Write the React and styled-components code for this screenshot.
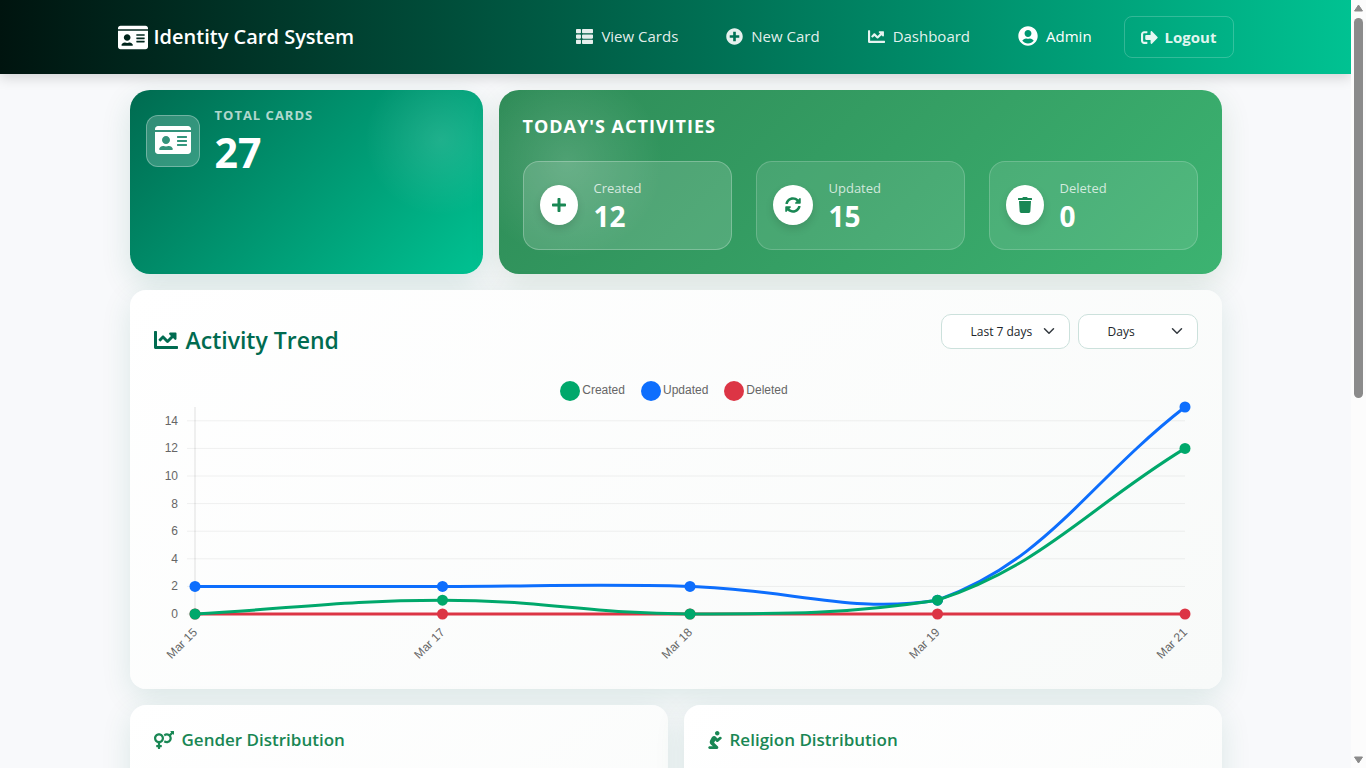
import React from "react";
import styled, { createGlobalStyle } from "styled-components";
import {
  FaIdCard,
  FaThList,
  FaPlusCircle,
  FaChartLine,
  FaUserCircle,
  FaSignOutAlt,
  FaPlus,
  FaSyncAlt,
  FaTrash,
  FaVenusMars,
  FaPray,
} from "react-icons/fa";

const GlobalStyle = createGlobalStyle`
  *, *::before, *::after { box-sizing: border-box; }
  body {
    margin: 0;
    background: #f8f9fb;
    color: #212529;
    font-family: "Segoe UI", "Open Sans", "Noto Sans", sans-serif;
    font-size: 16px;
    line-height: 24px;
  }
  h2, h3, p, dl, dt, dd { margin: 0; font-weight: inherit; }
  svg { flex: none; }
`;

const Window = styled.div`
  display: grid;
  grid-template-columns: minmax(0, 1fr) 15px;
  height: 100vh;
  overflow: hidden;
`;

const Page = styled.div`
  overflow: hidden;
`;

const Glyph = styled.span`
  display: inline-flex;
  flex: none;

  svg {
    display: block;
    width: ${(p) => p.$width || p.$size}px;
    height: ${(p) => p.$size}px;
  }
`;

/* Navigation */

const NavBar = styled.header`
  position: relative;
  background: linear-gradient(90deg, #00140f 0%, #006b50 50%, #00c292 100%);
  box-shadow: 0 4px 12px rgba(0, 0, 0, 0.15);
`;

const NavInner = styled.div`
  display: flex;
  align-items: center;
  justify-content: space-between;
  max-width: 1140px;
  margin: 0 auto;
  padding: 16px 12px;
`;

const Brand = styled.a`
  display: flex;
  align-items: center;
  gap: 6px;
  color: #fff;
  font-size: 20px;
  font-weight: 600;
  text-decoration: none;
`;

const NavLinks = styled.nav`
  display: flex;
  align-items: center;
  gap: 48px;
  padding-bottom: 2px;
`;

const NavLink = styled.a`
  display: flex;
  align-items: center;
  gap: 8px;
  color: ${(p) => (p.$strong ? "#fff" : "rgba(255, 255, 255, 0.9)")};
  font-size: 15px;
  text-decoration: none;
`;

const Account = styled.div`
  display: flex;
  align-items: center;
  gap: 32px;
`;

const LogoutButton = styled.button`
  display: flex;
  align-items: center;
  gap: 7px;
  height: 42px;
  padding: 0 16px;
  border: 1px solid rgba(255, 255, 255, 0.2);
  border-radius: 8px;
  background: transparent;
  color: rgba(255, 255, 255, 0.9);
  font: inherit;
  font-size: 15px;
  font-weight: 700;
`;

/* Summary cards */

const Content = styled.main`
  display: grid;
  gap: 16px;
  max-width: 1140px;
  margin: 0 auto;
  padding: 16px 24px;
`;

const SummaryRow = styled.div`
  display: grid;
  grid-template-columns: minmax(0, 353fr) minmax(0, 723fr);
  gap: 16px;
`;

const TotalCard = styled.section`
  display: flex;
  align-items: flex-start;
  gap: 15px;
  padding: 13px 16px;
  border-radius: 20px;
  background: radial-gradient(circle at 88% 27%, rgba(255, 255, 255, 0.12), transparent 76px),
    linear-gradient(135deg, #006b50 0%, #00c292 100%);
  box-shadow: 0 10px 30px rgba(0, 107, 80, 0.14);
  color: #fff;
`;

const TotalIcon = styled.span`
  display: grid;
  place-items: center;
  width: 54px;
  height: 52px;
  margin-top: 12px;
  padding-bottom: 2px;
  border: 1px solid rgba(255, 255, 255, 0.3);
  border-radius: 12px;
  background: rgba(255, 255, 255, 0.2);
`;

const TotalLabel = styled.h2`
  color: rgba(255, 255, 255, 0.7);
  font-size: 13px;
  font-weight: 700;
  letter-spacing: 1px;
`;

const TotalValue = styled.p`
  font-size: 41px;
  font-weight: 700;
  line-height: 50px;
`;

const ActivityCard = styled.section`
  padding: 24px;
  border-radius: 20px;
  background: radial-gradient(circle at 68px 72px, rgba(255, 255, 255, 0.15), transparent 96px),
    linear-gradient(135deg, #2e8b57 0%, #3cb371 100%);
  box-shadow: 0 10px 30px rgba(46, 107, 60, 0.14);
  color: #fff;
`;

const ActivityTitle = styled.h2`
  margin-bottom: 23px;
  font-size: 18px;
  font-weight: 700;
  letter-spacing: 1px;
`;

const StatGrid = styled.dl`
  display: grid;
  grid-template-columns: repeat(3, minmax(0, 1fr));
  gap: 24px;
`;

const Stat = styled.div`
  display: flex;
  align-items: center;
  gap: 16px;
  height: 89px;
  padding: 0 16px 1px;
  border: 1px solid rgba(255, 255, 255, ${(p) => (p.$active ? 0.25 : 0.18)});
  border-radius: 16px;
  background: rgba(255, 255, 255, ${(p) => (p.$active ? 0.15 : 0.1)});
`;

const StatIcon = styled.span`
  display: inline-flex;
  padding: 12px;
  border-radius: 50%;
  background: #fff;
  box-shadow: 0 4px 8px rgba(0, 0, 0, 0.12);
  color: #198754;
`;

const StatLabel = styled.dt`
  color: rgba(255, 255, 255, 0.75);
  font-size: 13px;
  line-height: 22px;
`;

const StatValue = styled.dd`
  font-size: 28px;
  font-weight: 700;
  line-height: 34px;
`;

/* Chart panels */

const Panel = styled.section`
  padding: 24px;
  border-radius: 16px;
  background: linear-gradient(145deg, #ffffff 0%, #f8faf9 100%);
  box-shadow: 0 8px 30px rgba(0, 107, 80, 0.12);
`;

const PanelHeader = styled.div`
  display: flex;
  align-items: flex-start;
  justify-content: space-between;
`;

const TrendTitle = styled.h2`
  display: flex;
  align-items: center;
  gap: 8px;
  height: 52px;
  color: #006b50;
  font-size: 23px;
  font-weight: 600;
`;

const Filters = styled.div`
  display: flex;
  gap: 8px;
`;

const Picker = styled.label`
  position: relative;
  display: block;
  width: ${(p) => p.$width}px;
`;

const Select = styled.select`
  appearance: none;
  width: 100%;
  height: 35px;
  padding: 1px 24px 0 29px;
  border: 1px solid #cce1dc;
  border-radius: 10px;
  background: #fff;
  color: #212529;
  font: inherit;
  font-size: 12px;
`;

const Chevron = styled.svg`
  position: absolute;
  top: 11px;
  right: 15px;
  width: 12px;
  height: 12px;
  pointer-events: none;
`;

const Legend = styled.ul`
  display: flex;
  justify-content: center;
  gap: 16px;
  margin: 14px 0 6px;
  padding: 0 3px 0 0;
  list-style: none;
  color: #666;
  font: 12px/20px "Liberation Sans", Arial, sans-serif;
`;

const LegendItem = styled.li`
  display: flex;
  gap: 2px;

  &::before {
    content: "";
    width: 20px;
    height: 20px;
    margin-top: 1px;
    border-radius: 50%;
    background: ${(p) => p.$color};
  }
`;

const Chart = styled.svg`
  display: block;
  width: 100%;
  height: auto;
  overflow: visible;

  text {
    fill: #666;
    font: 12px "Liberation Sans", Arial, sans-serif;
    text-anchor: end;
  }
`;

const SplitRow = styled.div`
  display: grid;
  grid-template-columns: repeat(2, minmax(0, 1fr));
  gap: 16px;
`;

const SplitPanel = styled(Panel)`
  height: 380px;
`;

const SplitTitle = styled.h3`
  display: flex;
  align-items: center;
  gap: 8px;
  color: #198754;
  font-size: 17px;
  font-weight: 600;
  line-height: 22px;
`;

/* Scroll track */

const Track = styled.div`
  display: flex;
  flex-direction: column;
  align-items: center;
  padding: 4px 0;
  background: #fcfcfc;
`;

const Thumb = styled.div`
  flex: none;
  width: 9px;
  height: 50%;
  margin: 6px 0 auto;
  border-radius: 5px;
  background: #8b8b8b;
`;

const labels = ["Mar 15", "Mar 17", "Mar 18", "Mar 19", "Mar 21"];
const series = [
  { name: "Created", color: "#00a86b", values: [0, 1, 0, 1, 12] },
  { name: "Updated", color: "#0d6efd", values: [2, 2, 2, 1, 15] },
  { name: "Deleted", color: "#dc3545", values: [0, 0, 0, 0, 0] },
];

const area = { left: 41, right: 1031, top: 0, bottom: 207 };
const xAt = (i) => area.left + ((area.right - area.left) * i) / (labels.length - 1);
const yAt = (v) => area.bottom - ((area.bottom - area.top) * v) / 15;

function curve(values, tension = 0.4) {
  const pts = values.map((v, i) => [xAt(i), yAt(v)]);
  const clamp = (y) => Math.max(area.top, Math.min(area.bottom, y));
  const handles = pts.map((cur, i) => {
    const prev = pts[i - 1] || cur;
    const next = pts[i + 1] || cur;
    const before = Math.hypot(cur[0] - prev[0], cur[1] - prev[1]);
    const after = Math.hypot(next[0] - cur[0], next[1] - cur[1]);
    const a = (tension * before) / (before + after);
    const b = (tension * after) / (before + after);
    const dx = next[0] - prev[0];
    const dy = next[1] - prev[1];
    return {
      in: [cur[0] - a * dx, clamp(cur[1] - a * dy)],
      out: [cur[0] + b * dx, clamp(cur[1] + b * dy)],
    };
  });
  return pts
    .map((p, i) => (i === 0 ? `M${p}` : `C${handles[i - 1].out} ${handles[i].in} ${p}`))
    .join(" ");
}

function TrendChart() {
  return (
    <Chart viewBox="0 0 1044 258" role="img" aria-label="Activity trend by day">
      {[0, 2, 4, 6, 8, 10, 12, 14].map((v) => (
        <g key={v}>
          <line x1={area.left - 8} x2={area.right} y1={yAt(v)} y2={yAt(v)} stroke="rgba(0,0,0,0.06)" />
          <text x={area.left - 17} y={yAt(v) + 4}>{v}</text>
        </g>
      ))}
      <line x1={area.left} x2={area.left} y1={area.top} y2={area.bottom} stroke="rgba(0,0,0,0.12)" />
      {labels.map((label, i) => (
        <text key={label} transform={`translate(${xAt(i) + 3} ${area.bottom + 19}) rotate(-45)`}>
          {label}
        </text>
      ))}
      {[...series].reverse().map((s) => (
        <g key={s.name}>
          <path d={curve(s.values)} fill="none" stroke={s.color} strokeWidth="3" />
          {s.values.map((v, i) => (
            <circle key={labels[i]} cx={xAt(i)} cy={yAt(v)} r="5.5" fill={s.color} />
          ))}
        </g>
      ))}
    </Chart>
  );
}

function Filter({ label, width, options }) {
  return (
    <Picker $width={width}>
      <Select aria-label={label}>
        {options.map((o) => (
          <option key={o}>{o}</option>
        ))}
      </Select>
      <Chevron viewBox="0 0 16 16" aria-hidden="true">
        <path d="m2 5 6 6 6-6" fill="none" stroke="#343a40" strokeWidth="2" strokeLinecap="round" strokeLinejoin="round" />
      </Chevron>
    </Picker>
  );
}

const stats = [
  { label: "Created", value: 12, icon: <FaPlus />, iconWidth: 14, active: true },
  { label: "Updated", value: 15, icon: <FaSyncAlt />, iconWidth: 16 },
  { label: "Deleted", value: 0, icon: <FaTrash />, iconWidth: 14 },
];

export default function App() {
  return (
    <Window>
      <GlobalStyle />
      <Page>
        <NavBar>
          <NavInner>
            <Brand href="#home">
              <Glyph $size={27} $width={30}><FaIdCard /></Glyph>
              Identity Card System
            </Brand>
            <Account>
              <NavLinks>
                <NavLink href="#cards"><Glyph $size={17}><FaThList /></Glyph>View Cards</NavLink>
                <NavLink href="#new"><Glyph $size={17}><FaPlusCircle /></Glyph>New Card</NavLink>
                <NavLink href="#dashboard"><Glyph $size={17}><FaChartLine /></Glyph>Dashboard</NavLink>
                <NavLink href="#admin" $strong><Glyph $size={20}><FaUserCircle /></Glyph>Admin</NavLink>
              </NavLinks>
              <LogoutButton type="button"><Glyph $size={17}><FaSignOutAlt /></Glyph>Logout</LogoutButton>
            </Account>
          </NavInner>
        </NavBar>

        <Content>
          <SummaryRow>
            <TotalCard>
              <TotalIcon><Glyph $size={32} $width={36}><FaIdCard /></Glyph></TotalIcon>
              <div>
                <TotalLabel>TOTAL CARDS</TotalLabel>
                <TotalValue>27</TotalValue>
              </div>
            </TotalCard>
            <ActivityCard>
              <ActivityTitle>TODAY'S ACTIVITIES</ActivityTitle>
              <StatGrid>
                {stats.map((s) => (
                  <Stat key={s.label} $active={s.active}>
                    <StatIcon><Glyph $size={16} $width={s.iconWidth}>{s.icon}</Glyph></StatIcon>
                    <div>
                      <StatLabel>{s.label}</StatLabel>
                      <StatValue>{s.value}</StatValue>
                    </div>
                  </Stat>
                ))}
              </StatGrid>
            </ActivityCard>
          </SummaryRow>

          <Panel>
            <PanelHeader>
              <TrendTitle><Glyph $size={24}><FaChartLine /></Glyph>Activity Trend</TrendTitle>
              <Filters>
                <Filter label="Period" width={129} options={["Last 7 days", "Last 30 days"]} />
                <Filter label="Group by" width={120} options={["Days", "Months"]} />
              </Filters>
            </PanelHeader>
            <Legend>
              {series.map((s) => (
                <LegendItem key={s.name} $color={s.color}>{s.name}</LegendItem>
              ))}
            </Legend>
            <TrendChart />
          </Panel>

          <SplitRow>
            <SplitPanel>
              <SplitTitle><Glyph $size={18} $width={20}><FaVenusMars /></Glyph>Gender Distribution</SplitTitle>
            </SplitPanel>
            <SplitPanel>
              <SplitTitle><Glyph $size={18} $width={14}><FaPray /></Glyph>Religion Distribution</SplitTitle>
            </SplitPanel>
          </SplitRow>
        </Content>
      </Page>

      <Track aria-hidden="true">
        <svg width="9" height="8" viewBox="0 0 9 8"><path d="M4.5 1 8.5 7H.5z" fill="#8b8b8b" stroke="#8b8b8b" strokeLinejoin="round" /></svg>
        <Thumb />
        <svg width="9" height="8" viewBox="0 0 9 8"><path d="M4.5 7 .5 1h8z" fill="#8b8b8b" stroke="#8b8b8b" strokeLinejoin="round" /></svg>
      </Track>
    </Window>
  );
}
